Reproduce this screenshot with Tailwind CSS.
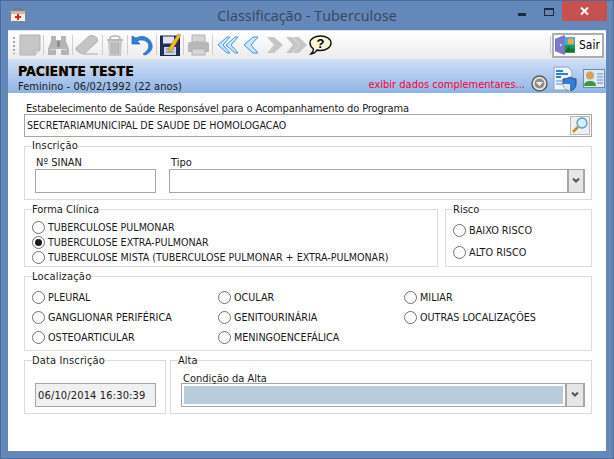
<!DOCTYPE html>
<html lang="pt">
<head>
<meta charset="utf-8">
<title>Classificação - Tuberculose</title>
<script src="https://cdn.jsdelivr.net/npm/@tailwindcss/browser@4"></script>
</head>
<body class="w-[614px] h-[459px] overflow-hidden bg-[#6588ba] font-['DejaVu_Sans_Condensed','Roboto',sans-serif] text-[11px] leading-[13px] text-[#1a1a1a]">
<div class="w-[614px] h-[459px] flex flex-col border border-[#4c6c9b]">
  <!-- title bar -->
  <div class="h-[29px] shrink-0 grid grid-cols-[1fr_auto_1fr] relative">
    <div class="pl-[9px] pt-[7px]">
      <svg class="w-[16px] h-[14px]" viewBox="0 0 16 14"><rect x="5" y="0.5" width="6" height="3" fill="none" stroke="#777"/><rect x="0.5" y="2.5" width="15" height="11" rx="1" fill="#eee" stroke="#8a8078"/><rect x="1" y="3" width="14" height="3" fill="#c9b9a9"/><path d="M7 6h2v2h2v2H9v2H7v-2H5V8h2z" fill="#d8261c"/></svg>
    </div>
    <div class="text-[14.4px] leading-[29px] text-[#38465a] font-['Open_Sans',sans-serif]">Classificação - Tuberculose</div>
    <div class="flex justify-end items-start pr-[6px]">
      <svg class="w-[8px] h-[3px] mt-[12px]" viewBox="0 0 8 3"><rect width="8" height="3" fill="#1c2a3d"/></svg>
      <svg class="w-[10px] h-[8px] ml-[18px] mt-[7px]" viewBox="0 0 10 8"><rect x="0.5" y="0.5" width="9" height="7" fill="none" stroke="#1c2a3d"/><rect width="10" height="2" fill="#1c2a3d"/></svg>
      <div class="w-[45px] h-[20px] ml-[8px] bg-[#c75050] flex items-center justify-center">
        <svg class="w-[9px] h-[8px]" viewBox="0 0 9 8"><path d="M1 0.5L8 7.5M8 0.5L1 7.5" stroke="#fff" stroke-width="2"/></svg>
      </div>
    </div>
  </div>
  <!-- client -->
  <div class="ml-[7px] mr-[7px] h-[421px] bg-white flex flex-col border-t border-[#dfe6f0]">
    <!-- toolbar -->
    <div class="h-[28px] shrink-0 flex items-center bg-gradient-to-b from-white to-[#ececec]">
      <svg class="w-[3px] h-[18px] ml-[5px]" viewBox="0 0 3 18"><path d="M1 1v2M1 5v2M1 9v2M1 13v2M1 17v1" stroke="#a8a8a8" stroke-width="2"/></svg>
      <svg class="w-[22px] h-[22px] ml-[3px]" viewBox="0 0 22 22"><path d="M1 1h20v15l-5 5H1z" fill="#c6c6c6" stroke="#b4b4b4"/><path d="M21 16h-5v5z" fill="#e2e2e2" stroke="#b4b4b4"/></svg>
      <div class="w-px h-[20px] bg-[#cfcfcf] ml-[2px]"></div>
      <svg class="w-[23px] h-[20px] ml-[3px]" viewBox="0 0 23 20"><path d="M4 1h5v4h5V1h5v5l3 8v6h-8v-6h-5v6H1v-6l3-8z" fill="#b5b5b5"/><path d="M10 6h3v6h-3z" fill="#8e8e8e"/><rect x="3" y="14" width="6" height="1" fill="#dadada"/><rect x="14" y="14" width="6" height="1" fill="#dadada"/></svg>
      <div class="w-px h-[20px] bg-[#cfcfcf] ml-[2px]"></div>
      <svg class="w-[24px] h-[20px] ml-[2px]" viewBox="0 0 24 20"><path d="M1 13L13 2c2-2 4-2 6-1l3 2c1 2 1 3-1 5L10 18c-2 1-3 1-5 0l-4-3z" fill="#c4c4c4" stroke="#b4b4b4"/><path d="M9 19h14" stroke="#aaa"/></svg>
      <div class="w-px h-[20px] bg-[#cfcfcf] ml-[3px]"></div>
      <svg class="w-[18px] h-[21px] ml-[3px]" viewBox="0 0 18 21"><path d="M1 4h16v2H1z" fill="#bdbdbd"/><ellipse cx="9" cy="3" rx="5" ry="2" fill="none" stroke="#b5b5b5" stroke-width="1.5"/><path d="M2 6h14l-1 15H3z" fill="#c8c8c8"/><path d="M6 8v11M9 8v11M12 8v11" stroke="#a4a4a4"/></svg>
      <div class="w-px h-[20px] bg-[#cfcfcf] ml-[3px]"></div>
      <svg class="w-[22px] h-[22px] ml-[3px]" viewBox="0 0 22 22"><path d="M1 2l0 8 8 0-3-3c4-2 9-1 11 2 2 4 0 8-5 11l2 1c5-2 8-6 7-10C20 4 12 0 5 4z" fill="#2f7fe0" stroke="#1c5fc0" stroke-width="0.7"/></svg>
      <div class="w-px h-[20px] bg-[#cfcfcf] ml-[3px]"></div>
      <svg class="w-[21px] h-[22px] ml-[3px]" viewBox="0 0 21 22"><rect x="0.500" y="2" width="19" height="19.500" fill="#22305c" stroke="#1c2544"/><rect x="3" y="2.500" width="11" height="7" fill="#dfe6f2"/><rect x="4" y="13" width="12" height="8" fill="#c9d3e6"/><path d="M6 15h8M6 18h8" stroke="#6f7ea3"/><path d="M18 0l3 1-9 15-3 2 0-4z" fill="#f4c020" stroke="#b87a10" stroke-width="0.6"/></svg>
      <div class="w-px h-[20px] bg-[#cfcfcf] ml-[2px]"></div>
      <svg class="w-[23px] h-[22px] ml-[3px]" viewBox="0 0 23 22"><path d="M5 1h13v7H5z" fill="#d4d4d4" stroke="#b4b4b4"/><path d="M3 8h17a2 2 0 0 1 2 2v8h-4v-3H5v3H1v-8a2 2 0 0 1 2-2z" fill="#b8b8b8"/><rect x="5" y="15" width="13" height="6" fill="#d6d6d6" stroke="#b0b0b0"/></svg>
      <div class="w-px h-[20px] bg-[#cfcfcf] ml-[2px]"></div>
      <svg class="w-[23px] h-[18px] ml-[3px]" viewBox="0 0 23 18"><path d="M11 1L2 9l9 8h3L7 9l7-8z" fill="#cfe6fb" stroke="#3a95ee"/><path d="M19 1l-9 8 9 8h3l-7-8 7-8z" fill="#cfe6fb" stroke="#3a95ee"/></svg>
      <svg class="w-[17px] h-[18px] ml-[3px]" viewBox="0 0 17 18"><path d="M11 1L2 9l9 8h5L9 9l7-8z" fill="#cfe6fb" stroke="#3a95ee"/></svg>
      <svg class="w-[18px] h-[16px] ml-[7px]" viewBox="0 0 18 16"><path d="M1 0h7l9 8-9 8H1l7-8z" fill="#c6c6c6"/></svg>
      <svg class="w-[22px] h-[16px] ml-[2px]" viewBox="0 0 22 16"><path d="M0 0h6l8 8-8 8H0l7-8z" fill="#c6c6c6"/><path d="M7 0h6l8 8-8 8H7l7-8z" fill="#c6c6c6"/></svg>
      <svg class="w-[23px] h-[20px] ml-[1px]" viewBox="0 0 23 20"><path d="M11.500 1C17 1 22 3.500 22 8s-5 7.500-10.500 7.500c-1.500 0-2.500 0-3.500-.5-1 2-3 3.500-6 4 1.500-1.500 2.500-3 2.500-5C2.500 12.500 1 10.500 1 8c0-4.500 5-7 10.500-7z" fill="#fdf6d8" stroke="#111" stroke-width="1.400"/><text x="11.500" y="13" text-anchor="middle" font-family="Liberation Sans" font-weight="700" font-size="13" fill="#000">?</text></svg>
      <div class="flex-1"></div>
      <div class="w-px h-[18px] bg-[#c8c8c8] mr-[1px]"></div>
      <div class="w-[52px] h-[25px] mr-[2px] border-2 border-[#aeaeae] bg-white flex items-center pl-[1px] text-[12px] text-black">
        <svg class="w-[20px] h-[20px] shrink-0" viewBox="0 0 21 20"><path d="M0 4l10-4v20L0 16z" fill="#7d78cf" stroke="#5a55a8" stroke-width="0.6"/><circle cx="6" cy="10" r="1" fill="#eef"/><rect x="10" y="2" width="11" height="16" fill="#1f9a4a"/><rect x="10" y="2" width="11" height="8" fill="#4aa6e8"/><circle cx="16.500" cy="6" r="3" fill="#f7b020"/><path d="M10 18l4-7 3 4 2-2 2 5z" fill="#146e33"/></svg>
        <span class="ml-[4px]">Sair</span>
      </div>
    </div>
    <!-- patient header -->
    <div class="h-[34px] shrink-0 flex bg-gradient-to-b from-[#d0e1f8] to-[#90b3e4] pl-[10px] pr-[1px]">
      <div class="flex-1 pt-[5px]">
        <div class="text-[14px] leading-[14px] font-bold text-black [text-shadow:0_0_1px_#b87a20]">PACIENTE TESTE</div>
        <div class="mt-[2px] leading-[13px] text-[#1b1b1b] tracking-[0.06px]">Feminino - 06/02/1992 (22 anos)</div>
      </div>
      <div class="text-[#f90030] pt-[19px] leading-[13px]">exibir dados complementares...</div>
      <svg class="w-[17px] h-[17px] ml-[6px] mt-[16px]" viewBox="0 0 17 17"><circle cx="8.500" cy="8.500" r="7.500" fill="#e8e8e8" stroke="#5c5c5c" stroke-width="1.500"/><circle cx="8.500" cy="8.500" r="5" fill="#8d8d8d"/><path d="M5 7h7l-3.500 4z" fill="#fff"/></svg>
      <svg class="w-[24px] h-[25px] ml-[5px] mt-[7px]" viewBox="0 0 24 25"><path d="M1 1h14l4 4v19H1z" fill="#eef4fc" stroke="#8aa6c8"/><path d="M3 5h7M3 8h12M3 11h5" stroke="#2b7fd8" stroke-width="2"/><path d="M3 15h6M3 18h6" stroke="#9cc0e8" stroke-width="2"/><path d="M10 13c3 0 5-1 7-2 2 1 4 2 6 2v5c0 4-3 6-6 7-3-1-7-3-7-7z" fill="#2f7fd8" stroke="#394a60"/><path d="M17 11v14c-3-1-7-3-7-7h7v-5z" fill="#d8e8f8"/></svg>
      <svg class="w-[22px] h-[19px] ml-[6px] mt-[10px]" viewBox="0 0 22 19"><rect x="0.500" y="0.500" width="21" height="18" fill="#dbe8f6" stroke="#6f8cab"/><circle cx="7" cy="6.500" r="4" fill="#d4a25f"/><path d="M1 17c0-4 3-5 6-5s6 1 6 5z" fill="#3a9a3a"/><path d="M14 5h6M14 8h6M14 11h6M14 14h6" stroke="#6d8fb5"/></svg>
    </div>
    <!-- form -->
    <div class="flex-1 pl-[16px] pr-[14px] pt-[9px] flex flex-col">
      <label class="h-[12px] pl-[2px] leading-[14px] tracking-[-0.14px]">Estabelecimento de Saúde Responsável para o Acompanhamento do Programa</label>
      <div class="h-[23px] shrink-0 border border-[#a6a6a6] flex items-center justify-between pl-[2px] pr-[1px]">
        <span class="text-[10.6px]">SECRETARIAMUNICIPAL DE SAUDE DE HOMOLOGACAO</span>
        <div class="w-[20px] h-[19px] bg-[#f0f0f0] border border-[#b8b8b8] flex items-center justify-center">
          <svg class="w-[18px] h-[17px]" viewBox="0 0 18 17"><circle cx="11" cy="6" r="5" fill="#d4ecfb" stroke="#5a9bd0" stroke-width="1.300"/><path d="M7 10l-5 5" stroke="#c78a30" stroke-width="2.500"/></svg>
        </div>
      </div>

      <fieldset class="mt-[3px] h-[60px] shrink-0 border border-[#dcdcdc]">
        <legend class="ml-[7px] leading-[13px] tracking-[0.2px] -translate-y-[1px]">Inscrição</legend>
        <div class="flex pl-[10px] pt-[3px] gap-[13px]">
          <div class="w-[121px]">
            <div class="h-[13px] pl-[1px]">Nº SINAN</div>
            <div class="h-[24px] border border-[#a6a6a6]"></div>
          </div>
          <div class="w-[416px]">
            <div class="h-[13px] pl-[2px]">Tipo</div>
            <div class="h-[24px] border border-[#a6a6a6] flex justify-end">
              <div class="w-[17px] bg-[#e6e6e6] border-l-2 border-r border-[#a6a6a6] flex items-center justify-center">
                <svg class="w-[8px] h-[6px]" viewBox="0 0 8 6"><path d="M1 0.500l3 3 3-3" fill="none" stroke="#555" stroke-width="2"/></svg>
              </div>
            </div>
          </div>
        </div>
      </fieldset>

      <div class="mt-[3px] flex gap-[7px] h-[64px] shrink-0">
        <fieldset class="w-[414px] border border-[#dcdcdc]">
          <legend class="ml-[7px] leading-[13px]">Forma Clínica</legend>
          <div class="pl-[7px] pt-[4px] flex flex-col text-[10.6px]">
            <div class="h-[15px] flex items-center gap-[3px]"><span class="w-[13px] h-[13px] rounded-full border border-[#707070] bg-white"></span>TUBERCULOSE PULMONAR</div>
            <div class="h-[15px] flex items-center gap-[3px]"><span class="w-[13px] h-[13px] rounded-full border border-[#707070] bg-white flex items-center justify-center"><span class="w-[7px] h-[7px] rounded-full bg-[#1d1d1d]"></span></span>TUBERCULOSE EXTRA-PULMONAR</div>
            <div class="h-[15px] flex items-center gap-[3px]"><span class="w-[13px] h-[13px] rounded-full border border-[#707070] bg-white"></span>TUBERCULOSE MISTA (TUBERCULOSE PULMONAR + EXTRA-PULMONAR)</div>
          </div>
        </fieldset>
        <fieldset class="flex-1 border border-[#dcdcdc]">
          <legend class="ml-[7px] leading-[13px]">Risco</legend>
          <div class="pl-[7px] pt-[6px] flex flex-col gap-[6px] text-[10.8px]">
            <div class="h-[16px] flex items-center gap-[3px]"><span class="w-[13px] h-[13px] rounded-full border border-[#707070] bg-white"></span>BAIXO RISCO</div>
            <div class="h-[16px] flex items-center gap-[3px]"><span class="w-[13px] h-[13px] rounded-full border border-[#707070] bg-white"></span>ALTO RISCO</div>
          </div>
        </fieldset>
      </div>

      <fieldset class="mt-[3px] h-[81px] shrink-0 border border-[#dcdcdc]">
        <legend class="ml-[7px] leading-[13px] tracking-[0.2px]">Localização</legend>
        <div class="pl-[7px] pt-[4px] grid grid-cols-[186px_186px_1fr] auto-rows-[20px] items-center text-[10.7px]">
          <div class="flex items-center gap-[3px]"><span class="w-[13px] h-[13px] rounded-full border border-[#707070] bg-white"></span>PLEURAL</div>
          <div class="flex items-center gap-[3px]"><span class="w-[13px] h-[13px] rounded-full border border-[#707070] bg-white"></span>OCULAR</div>
          <div class="flex items-center gap-[3px]"><span class="w-[13px] h-[13px] rounded-full border border-[#707070] bg-white"></span>MILIAR</div>
          <div class="flex items-center gap-[3px]"><span class="w-[13px] h-[13px] rounded-full border border-[#707070] bg-white"></span>GANGLIONAR PERIFÉRICA</div>
          <div class="flex items-center gap-[3px]"><span class="w-[13px] h-[13px] rounded-full border border-[#707070] bg-white"></span>GENITOURINÁRIA</div>
          <div class="flex items-center gap-[3px]"><span class="w-[13px] h-[13px] rounded-full border border-[#707070] bg-white"></span>OUTRAS LOCALIZAÇÕES</div>
          <div class="flex items-center gap-[3px]"><span class="w-[13px] h-[13px] rounded-full border border-[#707070] bg-white"></span>OSTEOARTICULAR</div>
          <div class="flex items-center gap-[3px]"><span class="w-[13px] h-[13px] rounded-full border border-[#707070] bg-white"></span>MENINGOENCEFÁLICA</div>
        </div>
      </fieldset>

      <div class="mt-[3px] flex gap-[4px] h-[60px] shrink-0">
        <fieldset class="w-[142px] border border-[#dcdcdc]">
          <legend class="ml-[7px] leading-[13px] tracking-[0.15px]">Data Inscrição</legend>
          <div class="ml-[10px] mt-[16px] w-[121px] h-[24px] bg-[#f0f0f0] border border-[#a6a6a6] flex items-center pl-[2px] tracking-[0.15px]">06/10/2014 16:30:39</div>
        </fieldset>
        <fieldset class="flex-1 border border-[#dcdcdc]">
          <legend class="ml-[7px] leading-[13px]">Alta</legend>
          <div class="pl-[10px] pt-[5px]">
            <div class="h-[11px] leading-[13px] pl-[2px]">Condição da Alta</div>
            <div class="w-[404px] h-[24px] border border-[#a6a6a6] flex p-[2px] pr-0">
              <div class="flex-1 bg-[#b8ccdc]"></div>
              <div class="w-[19px] -my-[2px] ml-[2px] bg-[#e6e6e6] border-l-2 border-r border-[#a6a6a6] flex items-center justify-center">
                <svg class="w-[8px] h-[6px]" viewBox="0 0 8 6"><path d="M1 0.500l3 3 3-3" fill="none" stroke="#555" stroke-width="2"/></svg>
              </div>
            </div>
          </div>
        </fieldset>
      </div>
    </div>
  </div>
</div>
</body>
</html>
